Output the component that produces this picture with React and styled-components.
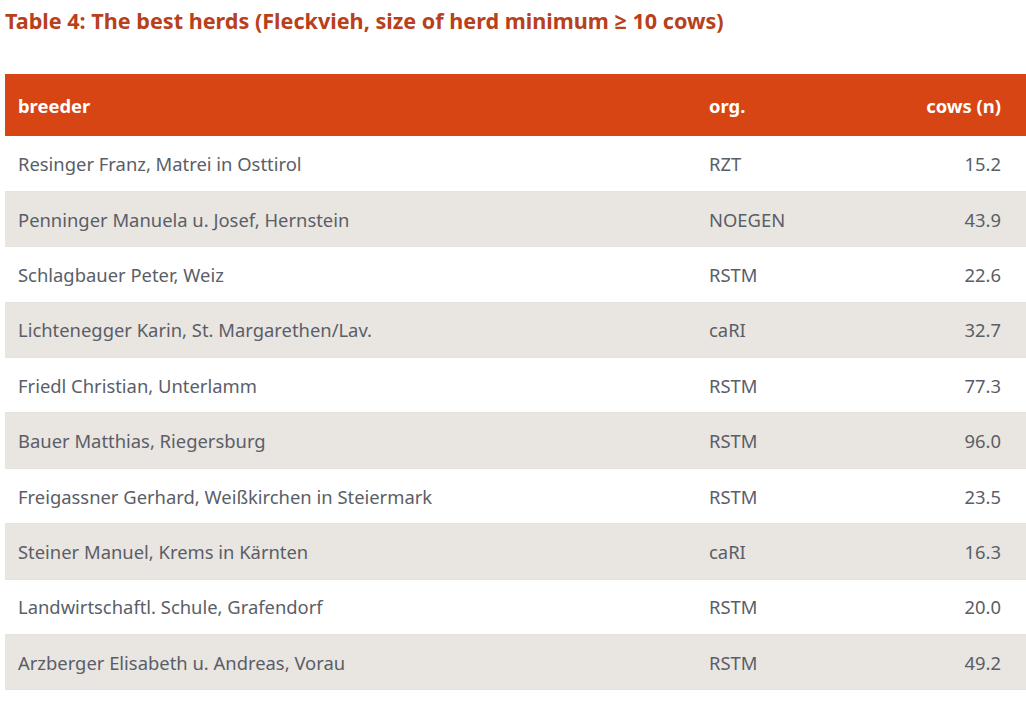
import React from 'react';
import styled, {createGlobalStyle} from 'styled-components';

const rows = [
  ['Resinger Franz, Matrei in Osttirol', 'RZT', '15.2'],
  ['Penninger Manuela u. Josef, Hernstein', 'NOEGEN', '43.9'],
  ['Schlagbauer Peter, Weiz', 'RSTM', '22.6'],
  ['Lichtenegger Karin, St. Margarethen/Lav.', 'caRI', '32.7'],
  ['Friedl Christian, Unterlamm', 'RSTM', '77.3'],
  ['Bauer Matthias, Riegersburg', 'RSTM', '96.0'],
  ['Freigassner Gerhard, Weißkirchen in Steiermark', 'RSTM', '23.5'],
  ['Steiner Manuel, Krems in Kärnten', 'caRI', '16.3'],
  ['Landwirtschaftl. Schule, Grafendorf', 'RSTM', '20.0'],
  ['Arzberger Elisabeth u. Andreas, Vorau', 'RSTM', '49.2']
];

const Global = createGlobalStyle`
  body {
    margin: 0;
    background: #fff;
    font-family: 'Noto Sans', 'Open Sans', sans-serif;
  }
`;

export default function App() {
  return (
    <Page>
      <Global />
      <Title>Table 4: The best herds (Fleckvieh, size of herd minimum ≥ 10 cows)</Title>
      <Table>
        <colgroup>
          <col style={{width: 691}} />
          <col style={{width: 200}} />
          <col />
        </colgroup>
        <thead>
          <tr>
            <Th>breeder</Th>
            <Th>org.</Th>
            <Th align="right">cows (n)</Th>
          </tr>
        </thead>
        <tbody>
          {rows.map(([breeder, org, cows], i) => (
            <Row key={i} odd={i % 2 === 1}>
              <Td>{breeder}</Td>
              <Td>{org}</Td>
              <Td align="right">{cows}</Td>
            </Row>
          ))}
        </tbody>
      </Table>
    </Page>
  );
}

const Page = styled.div`
  padding: 6px 0 0 5px;
`;

const Title = styled.h3`
  margin: 0 0 39px;
  font-size: 21.6px;
  line-height: 29px;
  font-weight: 700;
  color: #b8401b;
`;

const Table = styled.table`
  width: 1021px;
  table-layout: fixed;
  border-collapse: collapse;
  font-size: 18.4px;
`;

const Th = styled.th`
  background: #d74515;
  color: #fff;
  height: 62px;
  padding: 0 25px 0 13px;
  text-align: ${p => p.align || 'left'};
  font-weight: 700;
  box-sizing: border-box;
`;

const Row = styled.tr`
  background: ${p => (p.odd ? '#e9e5e0' : '#fff')};
  border-bottom: 1px solid #e6e2dd;
`;

const Td = styled.td`
  height: 55.4px;
  padding: 0 25px 0 13px;
  color: #5a5e68;
  text-align: ${p => p.align || 'left'};
  box-sizing: border-box;
  white-space: nowrap;
`;
